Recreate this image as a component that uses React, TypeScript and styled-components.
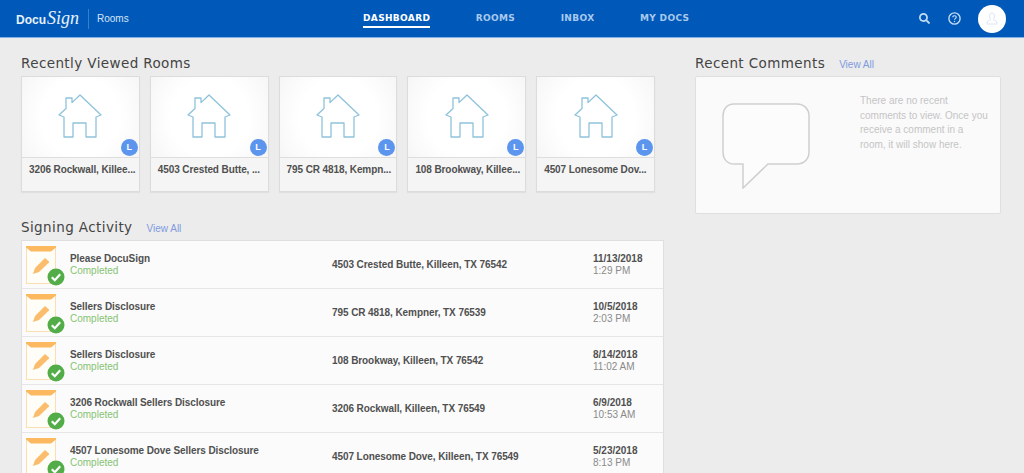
import { FaSearch } from "react-icons/fa";
import styled, { createGlobalStyle } from "styled-components";

const GlobalStyle = createGlobalStyle`
  html, body {
    margin: 0;
    height: 100%;
    overflow: hidden;
    background-color: #ececec;
    font-family: "Liberation Sans", Arial, sans-serif;
  }
`;

const Header = styled.header`
  display: flex;
  align-items: center;
  height: 37px;
  padding: 0 18px 0 16px;
  background-color: #0059b9;
  border-bottom: 1px solid #7fb2e6;
`;

const Brand = styled.div`
  display: flex;
  align-items: center;
  flex: 0 0 347px;
  height: 100%;
`;

const Logo = styled.div`
  display: flex;
  align-items: baseline;
  width: 72px;
  color: #e8f1fb;
`;

const LogoDocu = styled.span`
  font-size: 12px;
  font-weight: 700;
`;

const LogoSign = styled.span`
  font-family: "Liberation Serif", serif;
  font-size: 18px;
  font-style: italic;
  margin-left: 1px;
`;

const BrandDivider = styled.div`
  width: 1px;
  height: 20px;
  background-color: #3a7fca;
`;

const Product = styled.span`
  margin-left: 8px;
  font-size: 10px;
  color: #d6e5f6;
`;

const Nav = styled.nav`
  display: flex;
  gap: 45.5px;
  height: 100%;
  align-items: center;
`;

const NavItem = styled.a<{ $active?: boolean }>`
  padding: 2px 0 3px;
  margin-top: 1px;
  font-family: "DejaVu Sans", sans-serif;
  font-size: 9px;
  font-weight: 700;
  letter-spacing: 0.35px;
  color: ${(props) => (props.$active ? "#ffffff" : "#a9c9ee")};
  border-bottom: 2px solid
    ${(props) => (props.$active ? "#ffffff" : "transparent")};
`;

const Actions = styled.div`
  display: flex;
  align-items: center;
  margin-left: auto;
  color: #c3dcf5;
`;

const HelpIcon = styled.svg`
  margin-left: 18px;
`;

const Avatar = styled.div`
  display: flex;
  align-items: center;
  justify-content: center;
  width: 28px;
  height: 28px;
  margin-left: 17px;
  border-radius: 50%;
  background-color: #ffffff;
`;

const Main = styled.main`
  display: flex;
  gap: 31px;
  padding: 15px 0 0 21px;
`;

const LeftColumn = styled.div`
  display: flex;
  flex-direction: column;
  width: 643px;
`;

const RightColumn = styled.div`
  width: 306px;
`;

const SectionHead = styled.div`
  display: flex;
  align-items: baseline;
  height: 23px;
  padding-top: 2px;
  box-sizing: border-box;
`;

const SectionTitle = styled.h2`
  margin: 0;
  font-family: "DejaVu Sans", sans-serif;
  font-size: 13.5px;
  font-weight: 400;
  letter-spacing: 0.4px;
  color: #444444;
`;

const ViewAll = styled.a`
  margin-left: 14px;
  font-size: 10px;
  color: #7e9adf;
`;

const Cards = styled.div`
  display: grid;
  grid-template-columns: repeat(5, minmax(0, 1fr));
  gap: 10px;
  width: 634px;
  margin-bottom: 25px;
`;

const Card = styled.div`
  height: 116px;
  box-sizing: border-box;
  background-color: #f5f5f5;
  border: 1px solid #dcdcdc;
  box-shadow: 0 1px 1px rgba(0, 0, 0, 0.05);
`;

const CardImage = styled.div`
  position: relative;
  display: flex;
  justify-content: center;
  height: 81px;
  padding-top: 17px;
  box-sizing: border-box;
  background: radial-gradient(circle at 50% 50%, #ffffff 55%, #f6f6f6 100%);
  border-bottom: 1px solid #dedede;
`;

const Badge = styled.div`
  position: absolute;
  right: 1px;
  bottom: 1px;
  width: 17px;
  height: 17px;
  border-radius: 50%;
  background-color: #5c95ee;
  color: #ffffff;
  font-size: 9px;
  font-weight: 700;
  line-height: 17px;
  text-align: center;
`;

const CardName = styled.div`
  padding: 5px 7px 0;
  font-size: 10px;
  font-weight: 700;
  letter-spacing: -0.1px;
  line-height: 14px;
  color: #505050;
  white-space: nowrap;
`;

const ActivityList = styled.div`
  background-color: #fbfbfb;
  border: 1px solid #dfdfdf;
`;

const ActivityRow = styled.div`
  display: grid;
  grid-template-columns: 48px 262px 261px 1fr;
  align-items: center;
  height: 48px;
  box-sizing: border-box;
  border-bottom: 1px solid #e6e6e6;
`;

const DocWrap = styled.div`
  position: relative;
  width: 30px;
  height: 38px;
  margin-left: 4px;
`;

const CheckBadge = styled.svg`
  position: absolute;
  right: -9px;
  bottom: -2px;
`;

const CellStack = styled.div`
  display: flex;
  flex-direction: column;
  margin-top: 1px;
  line-height: 12px;
`;

const RowTitle = styled.span`
  font-size: 10px;
  font-weight: 700;
  letter-spacing: -0.08px;
  color: #505050;
`;

const RowStatus = styled.span`
  font-size: 10px;
  color: #86c373;
`;

const RowAddress = styled.span`
  margin-top: -1px;
  font-size: 10px;
  font-weight: 700;
  letter-spacing: -0.08px;
  color: #505050;
`;

const RowDate = styled.span`
  font-size: 10px;
  font-weight: 700;
  color: #505050;
`;

const RowTime = styled.span`
  font-size: 10px;
  color: #8a8a8a;
`;

const CommentsPanel = styled.div`
  display: flex;
  height: 138px;
  box-sizing: border-box;
  background-color: #fafafa;
  border: 1px solid #dfdfdf;
  border-radius: 2px;
`;

const Bubble = styled.svg`
  flex: none;
  margin: 26px 0 0 26px;
`;

const CommentsText = styled.p`
  width: 128px;
  margin: 17px 0 0 50px;
  font-size: 10px;
  line-height: 14.5px;
  color: #c5c5c5;
`;

const rooms = [
  "3206 Rockwall, Killee...",
  "4503 Crested Butte, ...",
  "795 CR 4818, Kempn...",
  "108 Brookway, Killee...",
  "4507 Lonesome Dov...",
];

const activity = [
  {
    title: "Please DocuSign",
    address: "4503 Crested Butte, Killeen, TX 76542",
    date: "11/13/2018",
    time: "1:29 PM",
  },
  {
    title: "Sellers Disclosure",
    address: "795 CR 4818, Kempner, TX 76539",
    date: "10/5/2018",
    time: "2:03 PM",
  },
  {
    title: "Sellers Disclosure",
    address: "108 Brookway, Killeen, TX 76542",
    date: "8/14/2018",
    time: "11:02 AM",
  },
  {
    title: "3206 Rockwall Sellers Disclosure",
    address: "3206 Rockwall, Killeen, TX 76549",
    date: "6/9/2018",
    time: "10:53 AM",
  },
  {
    title: "4507 Lonesome Dove Sellers Disclosure",
    address: "4507 Lonesome Dove, Killeen, TX 76549",
    date: "5/23/2018",
    time: "8:13 PM",
  },
];

function HouseIcon() {
  return (
    <svg width="44" height="44" viewBox="-1 -1 44 44" fill="none">
      <path
        d="M21 0L42 20L37 22V42H27V28H14V42H5V22L0 20L7 13.5V3H13V7.6Z"
        stroke="#8ec2dc"
        strokeWidth="1.3"
        strokeLinejoin="round"
      />
    </svg>
  );
}

function DocIcon() {
  return (
    <DocWrap>
      <svg width="30" height="38" viewBox="0 0 30 38" fill="none">
        <rect x="0.5" y="0.5" width="29" height="37" fill="#fffdf8" stroke="#fbdfb2" />
        <path d="M0 0H30V1.5L25 5.5H5L0 1.5Z" fill="#fdb95f" />
        <path d="M7 28L9 22L19 12L23.5 16L13 26Z" fill="#fbbd6c" />
      </svg>
      <CheckBadge width="18" height="18" viewBox="0 0 18 18">
        <circle cx="9" cy="9" r="8.5" fill="#52ad48" />
        <path
          d="M4.8 9.2L7.8 12.2L13.2 6.2"
          fill="none"
          stroke="#ffffff"
          strokeWidth="2.2"
        />
      </CheckBadge>
    </DocWrap>
  );
}

export default function App() {
  return (
    <>
      <GlobalStyle />
      <Header>
        <Brand>
          <Logo>
            <LogoDocu>Docu</LogoDocu>
            <LogoSign>Sign</LogoSign>
          </Logo>
          <BrandDivider />
          <Product>Rooms</Product>
        </Brand>
        <Nav>
          <NavItem $active>DASHBOARD</NavItem>
          <NavItem>ROOMS</NavItem>
          <NavItem>INBOX</NavItem>
          <NavItem>MY DOCS</NavItem>
        </Nav>
        <Actions>
          <FaSearch size={11} />
          <HelpIcon width="13" height="13" viewBox="0 0 13 13" fill="none">
            <circle cx="6.5" cy="6.5" r="5.6" stroke="currentColor" strokeWidth="1.4" />
            <path
              d="M4.8 5.2C4.8 3.2 8.3 3.3 8.3 5.2C8.3 6.4 6.5 6.4 6.5 7.8"
              stroke="currentColor"
              strokeWidth="1.2"
            />
            <circle cx="6.5" cy="9.5" r="0.7" fill="currentColor" />
          </HelpIcon>
          <Avatar>
            <svg width="12" height="13" viewBox="0 0 12 13" fill="none">
              <path
                d="M6 1C4.2 1 3.4 2.4 3.4 4C3.4 5.6 4.2 6.6 4.6 7.4L1 10V12H11V10L7.4 7.4C7.8 6.6 8.6 5.6 8.6 4C8.6 2.4 7.8 1 6 1Z"
                stroke="#d8e8f5"
              />
            </svg>
          </Avatar>
        </Actions>
      </Header>
      <Main>
        <LeftColumn>
          <SectionHead>
            <SectionTitle>Recently Viewed Rooms</SectionTitle>
          </SectionHead>
          <Cards>
            {rooms.map((room) => (
              <Card key={room}>
                <CardImage>
                  <HouseIcon />
                  <Badge>L</Badge>
                </CardImage>
                <CardName>{room}</CardName>
              </Card>
            ))}
          </Cards>
          <SectionHead>
            <SectionTitle>Signing Activity</SectionTitle>
            <ViewAll>View All</ViewAll>
          </SectionHead>
          <ActivityList>
            {activity.map((item) => (
              <ActivityRow key={item.date}>
                <DocIcon />
                <CellStack>
                  <RowTitle>{item.title}</RowTitle>
                  <RowStatus>Completed</RowStatus>
                </CellStack>
                <RowAddress>{item.address}</RowAddress>
                <CellStack>
                  <RowDate>{item.date}</RowDate>
                  <RowTime>{item.time}</RowTime>
                </CellStack>
              </ActivityRow>
            ))}
          </ActivityList>
        </LeftColumn>
        <RightColumn>
          <SectionHead>
            <SectionTitle>Recent Comments</SectionTitle>
            <ViewAll>View All</ViewAll>
          </SectionHead>
          <CommentsPanel>
            <Bubble width="88" height="86" viewBox="0 0 88 86" fill="none">
              <path
                d="M12 1H75C82 1 87 6 87 13V49C87 56 82 61 75 61H46L21 85V61H12C5 61 1 56 1 49V13C1 6 5 1 12 1Z"
                stroke="#cfcfcf"
                strokeWidth="1.5"
                fill="#fcfcfc"
              />
            </Bubble>
            <CommentsText>
              There are no recent comments to view. Once you receive a comment in
              a room, it will show here.
            </CommentsText>
          </CommentsPanel>
        </RightColumn>
      </Main>
    </>
  );
}
